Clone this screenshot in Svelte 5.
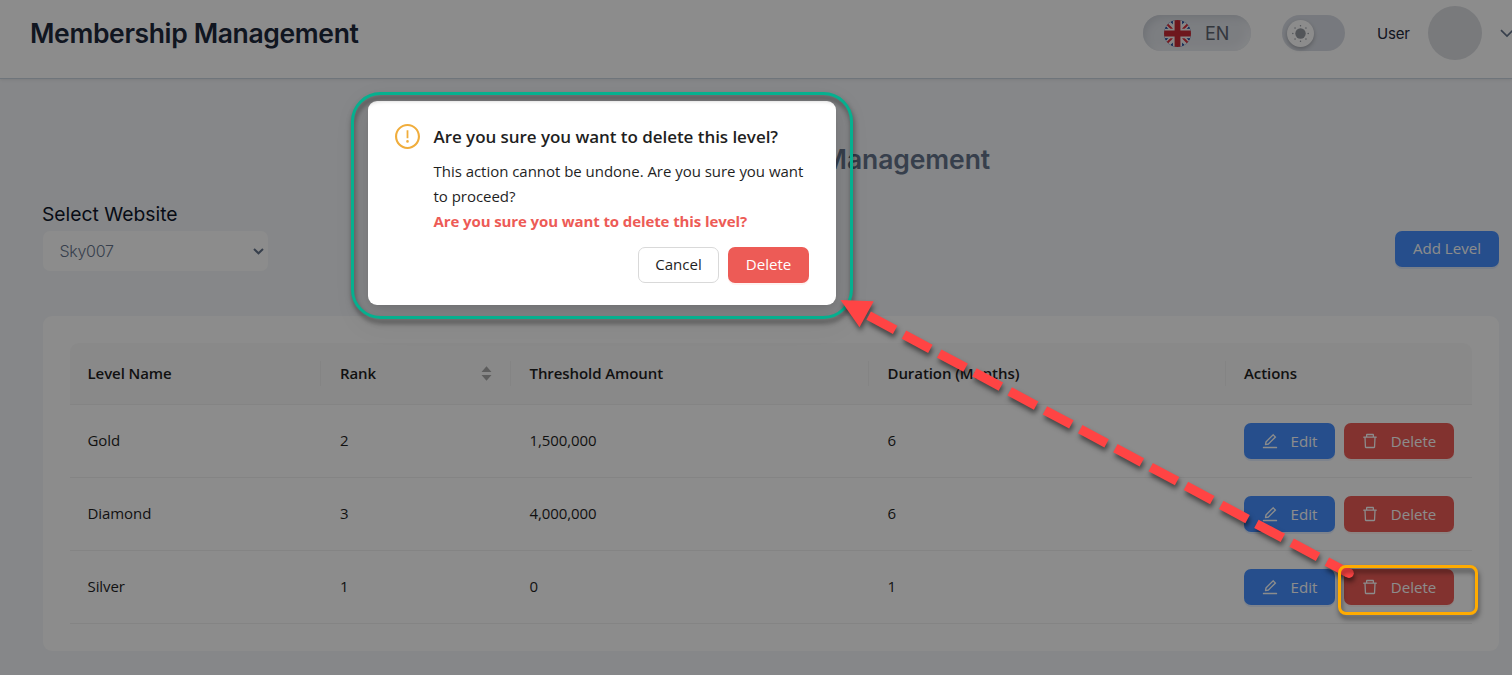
<script>
  const levels = [
    { name: 'Gold', rank: 2, threshold: '1,500,000', duration: 6 },
    { name: 'Diamond', rank: 3, threshold: '4,000,000', duration: 6 },
    { name: 'Silver', rank: 1, threshold: '0', duration: 1 }
  ];
  const suns = [0, 45, 90, 135, 180, 225, 270, 315];
  const editPath =
    'M257.7 752c2 0 4-.2 6-.5L431.9 722c2-.4 3.9-1.3 5.3-2.8l423.9-423.9a9.96 9.96 0 000-14.1L694.9 114.9c-1.9-1.9-4.4-2.9-7.1-2.9s-5.2 1-7.1 2.9L256.8 538.8c-1.5 1.5-2.4 3.3-2.8 5.3l-29.5 168.2a33.5 33.5 0 009.4 29.8c6.6 6.4 14.9 9.9 23.8 9.9zm67.4-174.4L687.8 215l73.3 73.3-362.7 362.6-88.9 15.7 15.6-89zM880 836H144c-17.7 0-32 14.3-32 32v36c0 4.4 3.6 8 8 8h784c4.4 0 8-3.6 8-8v-36c0-17.7-14.3-32-32-32z';
  const trashPath =
    'M360 184h-8c4.4 0 8-3.6 8-8v8h304v-8c0 4.4 3.6 8 8 8h-8v72h72v-80c0-35.3-28.7-64-64-64H352c-35.3 0-64 28.7-64 64v80h72v-72zm504 72H160c-17.7 0-32 14.3-32 32v32c0 4.4 3.6 8 8 8h60.4l24.7 523c1.6 34.1 29.8 61 63.9 61h454c34.2 0 62.3-26.8 63.9-61l24.7-523H888c4.4 0 8-3.6 8-8v-32c0-17.7-14.3-32-32-32zM731.3 840H292.7l-24.2-512h487l-24.2 512z';
</script>

<div class="page">
  <header>
    <h1>Membership Management</h1>
    <div class="tools">
      <div class="lang">
        <svg width="27" height="27" viewBox="0 0 27 27">
          <defs><clipPath id="round"><circle cx="13.5" cy="13.5" r="13.5" /></clipPath></defs>
          <g clip-path="url(#round)">
            <rect width="27" height="27" fill="#0a3a94" />
            <path d="M0 0L27 27M27 0L0 27" stroke="#f4f4f4" stroke-width="6.4" />
            <path d="M0 1L12 13M28 0L15 13M-1 27L12 14M27 26L15 14" stroke="#d8303c" stroke-width="2" />
            <path d="M13.5 0V27M0 13.5H27" stroke="#f4f4f4" stroke-width="9.4" />
            <path d="M13.5 0V27M0 13.5H27" stroke="#c92a36" stroke-width="5.8" />
          </g>
        </svg>
        <span>EN</span>
      </div>
      <div class="toggle">
        <div class="knob">
          <svg width="17" height="17" viewBox="0 0 17 17" fill="#969ba3">
            <circle cx="8.5" cy="8.5" r="5.2" />
            {#each suns as a}
              <circle cx="8.5" cy="0.8" r="0.75" transform="rotate({a} 8.5 8.5)" />
            {/each}
          </svg>
        </div>
      </div>
      <span class="user">User</span>
      <div class="avatar"></div>
      <svg class="chev" width="14" height="9" viewBox="0 0 14 9" fill="none" stroke="#64748b" stroke-width="1.7"><path d="M1 1.2L7 7L13 1.2" /></svg>
    </div>
  </header>

  <main>
    <h2>Management</h2>
    <div class="filters">
      <div class="field">
        <span class="label">Select Website</span>
        <div class="select">
          <span>Sky007</span>
          <svg width="11" height="7" viewBox="0 0 11 7" fill="none" stroke="#64748b" stroke-width="2"><path d="M1 1L5.5 5.3L10 1" /></svg>
        </div>
      </div>
      <button class="btn blue add">Add Level</button>
    </div>

    <section class="card">
      <div class="row head">
        <div>Level Name</div>
        <div class="sort">
          <span>Rank</span>
          <svg width="11" height="15" viewBox="0 0 11 15" fill="#aaa"><path d="M5.5 0.2L10.5 6H0.5ZM5.5 14.8L10.5 9H0.5Z" /></svg>
        </div>
        <div>Threshold Amount</div>
        <div>Duration (Months)</div>
        <div>Actions</div>
      </div>
      {#each levels as l}
        <div class="row">
          <div>{l.name}</div>
          <div>{l.rank}</div>
          <div>{l.threshold}</div>
          <div>{l.duration}</div>
          <div class="actions">
            <button class="btn blue"><svg width="16" height="16" viewBox="64 64 896 896" fill="currentColor"><path d={editPath} /></svg>Edit</button>
            <button class="btn red"><svg width="16" height="16" viewBox="64 64 896 896" fill="currentColor"><path d={trashPath} /></svg>Delete</button>
          </div>
        </div>
      {/each}
    </section>
  </main>

  <div class="mask"></div>

  <div class="modal">
    <svg class="warn" width="25" height="25" viewBox="64 64 896 896" fill="#f0ad3c">
      <path d="M512 64C264.6 64 64 264.6 64 512s200.6 448 448 448 448-200.6 448-448S759.4 64 512 64zm0 820c-205.4 0-372-166.6-372-372s166.6-372 372-372 372 166.6 372 372-166.6 372-372 372z" />
      <path d="M464 688a48 48 0 1096 0 48 48 0 10-96 0zm24-112h48c4.4 0 8-3.6 8-8V296c0-4.4-3.6-8-8-8h-48c-4.4 0-8 3.6-8 8v272c0 4.4 3.6 8 8 8z" />
    </svg>
    <div class="body">
      <div class="title">Are you sure you want to delete this level?</div>
      <p>This action cannot be undone. Are you sure you want<br />to proceed?</p>
      <p class="danger">Are you sure you want to delete this level?</p>
      <div class="foot">
        <button class="btn plain">Cancel</button>
        <button class="btn red">Delete</button>
      </div>
    </div>
  </div>

  <svg class="marks" width="1512" height="675" viewBox="0 0 1512 675" fill="none">
    <rect class="shade" x="352.5" y="93.5" width="499" height="224" rx="28" stroke="#05b08f" stroke-width="3" />
    <g class="shade">
      <path d="M840.5 300L873.7 301.3L859.5 327.2Z" fill="#ff4444" />
      <path d="M868.7 315.7L1348.5 573.2" stroke="#ff4444" stroke-width="9.4" stroke-dasharray="30 10" />
      <circle cx="1349" cy="573.2" r="4.8" fill="#ff4444" />
    </g>
    <rect class="shade" x="1339.5" y="566.5" width="137" height="47" rx="6.5" stroke="#ffab00" stroke-width="3" />
  </svg>
</div>

<style>
  :global(body) { margin: 0; overflow: hidden; }
  .page {
    position: relative; width: 1512px; height: 675px; overflow: hidden; box-sizing: border-box;
    background: #f4f6f9; font: 15px/25px 'Open Sans', sans-serif; color: #1f1f1f;
  }
  header {
    height: 78px; background: #fff; border-bottom: 1px solid #cbd5e1; box-shadow: 0 1px 3px rgba(0, 0, 0, .08);
    display: flex; justify-content: space-between; align-items: flex-start; box-sizing: content-box;
  }
  h1, h2 { margin: 0; font-family: Inter, sans-serif; font-weight: 600; font-size: 26.5px; line-height: 34px; white-space: nowrap; }
  h1 { padding: 16px 0 0 30px; color: #1e293b; letter-spacing: -.36px; }
  .tools { display: flex; align-items: center; height: 66px; font-family: Inter, sans-serif; }
  .lang {
    width: 108px; height: 36px; border-radius: 18px; background: #e2e5eb; box-sizing: border-box; padding-left: 21px;
    display: flex; align-items: center; gap: 14px; font-size: 18px; color: #5d6470;
    box-shadow: inset 4px 4px 8px -2px #c8cdd4, inset -4px -3px 8px -1px #f0f2f5;
  }
  .toggle { margin-left: 31px; width: 63px; height: 36px; border-radius: 18px; background: #d9dde5; display: flex; align-items: center; }
  .knob { margin-left: 5px; width: 27px; height: 27px; border-radius: 50%; background: #fff; display: grid; place-items: center; box-shadow: 0 2px 4px rgba(0, 0, 0, .25); }
  .user { margin-left: 32px; width: 33px; font-size: 15px; font-weight: 400; letter-spacing: -.15px; color: #1e293b; }
  .avatar { margin-left: 18px; width: 54px; height: 54px; border-radius: 50%; background: #dcdee2; }
  .chev { margin: 0 -2px 0 18px; flex: none; }

  main { padding: 63px 13px 0 43px; }
  h2 { text-align: right; padding-right: 509px; color: #64748b; letter-spacing: -.1px; }
  .filters { display: flex; justify-content: space-between; align-items: flex-end; padding-top: 25px; }
  .field { display: flex; flex-direction: column; gap: 3px; }
  .label { font: 400 19.3px/27px Inter, sans-serif; color: #0f172a; height: 27px; margin-left: -1px; }
  .select {
    width: 225px; height: 40px; border-radius: 7px; background: #fff; box-sizing: border-box; padding: 0 4px 0 16.5px;
    display: flex; align-items: center; justify-content: space-between; font: 300 16px Inter, sans-serif; color: #64748b; letter-spacing: -.3px;
  }
  .btn {
    height: 36px; box-sizing: border-box; border: 0; border-radius: 7px; padding: 0 0 2px; color: #fff;
    font: 15.1px 'Open Sans', sans-serif; display: flex; align-items: center; justify-content: center; white-space: nowrap;
  }
  .blue { background: #458fff; box-shadow: 0 2px 0 rgba(5, 100, 255, .1); }
  .red { background: #ed5b56; box-shadow: 0 2px 0 rgba(255, 38, 5, .06); }
  .add { width: 104px; margin-bottom: 4px; }

  .card { margin-top: 45px; height: 335px; border-radius: 9px; background: #fff; box-sizing: border-box; padding: 27px; }
  .row { display: grid; grid-template-columns: 252px 190px 358px 356.5px 245.5px; height: 73px; box-sizing: border-box; border-bottom: 1px solid #f0f0f0; align-items: center; letter-spacing: -.08px; }
  .row > div { padding: 0 0 2px 17.5px; }
  .row > div:nth-child(2) { padding-left: 18px; }
  .row > .actions { padding: 0 0 0 17.5px; letter-spacing: 0; }
  .head { height: 62px; background: #fafafa; font-weight: 600; border-radius: 9px 9px 0 0; }
  .head > div { height: 25px; border-right: 1px solid #f0f0f0; padding-bottom: 0; box-sizing: border-box; margin-right: 1px; }
  .head > div:last-child { border: 0; }
  .head > .sort { display: flex; align-items: center; justify-content: space-between; padding-right: 18px; }
  .actions { display: flex; gap: 9px; }
  .actions .btn { gap: 13px; padding: 0; }
  .actions .blue { width: 91px; }
  .actions .red { width: 110px; }

  .mask { position: absolute; inset: 0; background: rgba(0, 0, 0, .45); }
  .modal {
    position: absolute; left: 368px; top: 101px; width: 468px; height: 204px; border-radius: 9px; background: #fff;
    box-sizing: border-box; padding: 23px 27px 22px; display: flex; gap: 13.5px;
    box-shadow: 0 7px 18px rgba(0, 0, 0, .08), 0 3px 7px -4px rgba(0, 0, 0, .12), 0 10px 31px 9px rgba(0, 0, 0, .05);
  }
  .warn { flex: none; }
  .body { flex: 1; white-space: nowrap; letter-spacing: -.03px; }
  .title { font-size: 17px; font-weight: 600; height: 34.5px; line-height: 25px; letter-spacing: -.05px; }
  p { margin: 0; }
  .danger { color: #ed5b56; font-weight: 700; letter-spacing: -.1px; }
  .foot { display: flex; justify-content: flex-end; gap: 9px; padding-top: 13.5px; }
  .foot .btn { width: 81px; }
  .plain { background: #fff; color: #1f1f1f; border: 1px solid #d9d9d9; }
  .marks { position: absolute; inset: 0; }
  .shade { filter: drop-shadow(1px 4px 2.5px rgba(0, 0, 0, .5)); }
</style>
